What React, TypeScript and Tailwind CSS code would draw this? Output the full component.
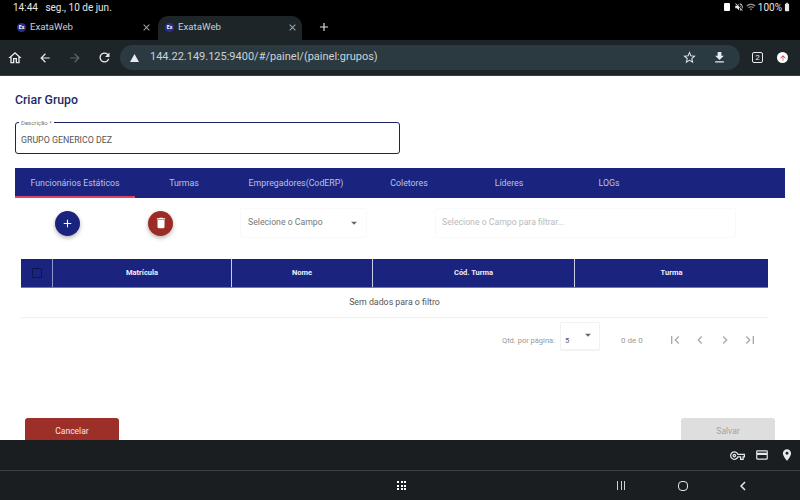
import React from "react";
import {
  MdAdd, MdArrowBack, MdArrowDropDown, MdArrowForward, MdChevronLeft, MdChevronRight, MdClose, MdDelete,
  MdFileDownload, MdFirstPage, MdLastPage, MdLocationOn, MdOutlineCreditCard, MdOutlineHome, MdOutlineVpnKey,
  MdRefresh, MdStarBorder, MdVolumeOff, MdWifi, MdBatteryFull, MdArrowUpward, MdKeyboardArrowLeft,
} from "react-icons/md";

function Favicon() {
  return (
    <span className="w-[9px] h-[9px] rounded-full bg-[#2a2f8f] text-white text-[5px] leading-[9px] text-center font-bold shrink-0">Ex</span>
  );
}

function BrowserTab({ active }: { active?: boolean }) {
  return (
    <div className={active ? "w-[144px] h-[24px] mt-[2px] pb-[2px] rounded-t-[10px] bg-[#1e2528] flex items-center pl-[7px] pr-[4px]" : "w-[155px] h-[24px] mt-[2px] pb-[2px] flex items-center pl-[17px] pr-[3px]"}>
      <Favicon />
      <span className="ml-[4px] text-[9.7px] text-[#c9ced1] flex-1">ExataWeb</span>
      <MdClose className="text-[#a4a9ac] text-[11px]" />
    </div>
  );
}

const tabs = [
  { label: "Funcionários Estáticos", w: "w-[120px]", active: true },
  { label: "Turmas", w: "w-[98px]" },
  { label: "Empregadores(CodERP)", w: "w-[126px]" },
  { label: "Coletores", w: "w-[100px]" },
  { label: "Líderes", w: "w-[100px]" },
  { label: "LOGs", w: "w-[100px]" },
];

export default function App() {
  return (
    <div className="w-[800px] h-[500px] overflow-hidden flex flex-col bg-black font-['Roboto',sans-serif]">
      {/* status bar */}
      <div className="h-[14px] shrink-0 flex items-center justify-between pl-[13px] pr-[8px] text-[10px] text-[#e6e6e6]">
        <span>14:44 <span className="ml-[5px]">seg., 10 de jun.</span></span>
        <span className="flex items-center gap-[2px]">
          <span className="w-[6px] h-[8px] rounded-[1px] bg-white mr-[2px]" />
          <MdVolumeOff className="text-[10px]" />
          <MdWifi className="text-[10px] text-[#999]" />
          <span>100%</span>
          <MdBatteryFull className="text-[10px] -ml-[2px]" />
        </span>
      </div>
      {/* tab strip */}
      <div className="h-[26px] shrink-0 flex text-white">
        <BrowserTab />
        <div className="w-[3px]" />
        <BrowserTab active />
        <MdAdd className="ml-[15px] mt-[6px] text-[14px] text-[#e0e0e0]" />
      </div>
      {/* toolbar */}
      <div className="h-[36px] shrink-0 bg-[#1e2528] border-b border-[#3a3f42] flex items-center text-[#e8eaed]">
        <div className="w-[120px] pl-[7px] flex items-center">
          <MdOutlineHome className="text-[16px]" />
          <MdArrowBack className="text-[14px] ml-[15px]" />
          <MdArrowForward className="text-[14px] ml-[16px] text-[#5f6669]" />
          <MdRefresh className="text-[15px] ml-[15px]" />
        </div>
        <div className="w-[620px] h-[25px] rounded-full bg-[#2a3a40] flex items-center pl-[10px] pr-[13px]">
          <svg width="9" height="8" viewBox="0 0 9 8" className="shrink-0"><path d="M4.5 0L9 8H0z" fill="#e8eaed" /></svg>
          <span className="ml-[11px] text-[11px] text-[#cdd3d5] flex-1">144.22.149.125:9400/#/painel/(painel:grupos)</span>
          <MdStarBorder className="text-[15px] mr-[15px]" />
          <MdFileDownload className="text-[15px]" />
        </div>
        <span className="ml-[12px] w-[11px] h-[11px] rounded-[2px] border border-[#e8eaed] text-[8px] leading-[9px] text-center">2</span>
        <span className="ml-[14px] w-[11px] h-[11px] rounded-full bg-white flex items-center justify-center">
          <MdArrowUpward className="text-[8px] text-[#c0303f]" />
        </span>
      </div>

      {/* page */}
      <div className="h-[364px] shrink-0 overflow-hidden bg-white pl-[15px] pr-[15px] relative">
        <h1 className="mt-[17px] h-[14px] leading-[14px] text-[12.3px] font-medium text-[#1f2a6b]">Criar Grupo</h1>

        <div className="relative mt-[15px] w-[385px] h-[32px] rounded-[3px] border-[1.5px] border-[#1b2260] flex items-center pl-[5px] pt-[6px] text-[8.8px] text-[#555]">
          <span className="absolute -top-[4px] left-[3px] bg-white px-[2px] text-[6px] leading-[7px] text-[#777]">Descrição *</span>
          GRUPO GENERICO DEZ
        </div>

        <div className="mt-[14px] h-[30px] bg-[#1a237e] flex">
          {tabs.map((t) => (
            <div key={t.label} className={`${t.w} h-full pt-[2px] flex items-center justify-center text-[8.8px] text-[#bcc1e2] ${t.active ? "border-y-2 border-t-transparent border-b-[#d9466a]" : ""}`}>
              {t.label}
            </div>
          ))}
        </div>

        {/* actions */}
        <div className="mt-[10px] h-[30px] flex items-center">
          <div className="ml-[40px] w-[25px] h-[25px] rounded-full bg-[#1a237e] shadow-[0_2px_4px_rgba(0,0,0,0.3)] flex items-center justify-center">
            <MdAdd className="text-white text-[13px]" />
          </div>
          <div className="ml-[68px] w-[25px] h-[25px] rounded-full bg-[#9c2b25] shadow-[0_2px_4px_rgba(0,0,0,0.3)] flex items-center justify-center">
            <MdDelete className="text-white text-[14px]" />
          </div>
          <div className="ml-[67px] w-[127px] h-[30px] rounded-[3px] border border-[#f9f9f9] flex items-center justify-between pl-[7px] pr-[5px] text-[8.7px] text-[#777]">
            Selecione o Campo
            <MdArrowDropDown className="text-[14px] text-[#666]" />
          </div>
          <div className="ml-[68px] w-[301px] h-[30px] rounded-[3px] border border-[#f9f9f9] flex items-center pl-[6px] text-[8.7px] text-[#bbbbbb]">
            Selecione o Campo para filtrar...
          </div>
        </div>

        {/* table */}
        <div className="mt-[21px] ml-[6px] w-[747px]">
          <div className="h-[29px] bg-[#1a237e] border-b border-[#6f78b8] grid grid-cols-[32px_179px_141px_202px_193px] text-[7.5px] font-bold text-[#eceefa]">
            <div className="flex items-center justify-center border-r border-[#8d94c8]">
              <span className="w-[10px] h-[10px] rounded-[1px] border border-[#0f1550]" />
            </div>
            <div className="flex items-center justify-center border-r border-[#c9cde6]">Matrícula</div>
            <div className="flex items-center justify-center border-r border-[#c9cde6]">Nome</div>
            <div className="flex items-center justify-center border-r border-[#c9cde6]">Cód. Turma</div>
            <div className="flex items-center justify-center">Turma</div>
          </div>
          <div className="h-[30px] border-b border-[#f1f1f1] flex items-center justify-center text-[8.8px] text-[#555]">
            Sem dados para o filtro
          </div>
          <div className="mt-[4px] h-[28px] flex items-start text-[7.5px] text-[#999]">
            <span className="ml-[481px] mt-[13px]">Qtd. por página:</span>
            <div className="ml-[5px] w-[40px] h-[28px] rounded-[2px] border border-[#f2f2f2] shadow-[0_1px_1px_rgba(0,0,0,0.05)] flex items-start justify-between pl-[4px] pr-[4px] pt-[5px] text-[#555]">
              <span className="mt-[7px]">5</span>
              <MdArrowDropDown className="text-[14px] text-[#666]" />
            </div>
            <span className="ml-[21px] mt-[13px] text-[8px]">0 de 0</span>
            <div className="ml-[24px] mt-[10px] flex items-center gap-[9px] text-[#a9a9a9]">
              <MdFirstPage className="text-[16px]" />
              <MdChevronLeft className="text-[16px]" />
              <MdChevronRight className="text-[16px]" />
              <MdLastPage className="text-[16px]" />
            </div>
          </div>
        </div>

        {/* footer buttons */}
        <div className="mt-[68px] flex justify-between pl-[10px] pr-[10px]">
          <div className="w-[94px] h-[36px] rounded-[3px] bg-[#9c2f28] pt-[7px] text-center text-[8.5px] leading-[13px] text-[#f3e6e4]">Cancelar</div>
          <div className="w-[94px] h-[36px] rounded-[3px] bg-[#dedede] pt-[7px] text-center text-[8.5px] leading-[13px] text-[#a3a3a3]">Salvar</div>
        </div>
      </div>

      {/* tablet bars */}
      <div className="h-[31px] shrink-0 bg-[#1a1e21] border-b border-[#3d4143] flex items-center justify-end pr-[6px] text-[#e6e8e9]">
        <MdOutlineVpnKey className="text-[15px]" />
        <MdOutlineCreditCard className="text-[14px] ml-[10px]" />
        <MdLocationOn className="text-[14px] ml-[11px]" />
      </div>
      <div className="flex-1 bg-[#1a1e21] flex items-center text-[#e6e8e9]">
        <div className="ml-[397px] grid grid-cols-3 gap-[1.5px]">
          {Array.from({ length: 9 }).map((_, i) => (
            <span key={i} className="w-[2px] h-[2px] bg-white" />
          ))}
        </div>
        <div className="ml-[211px] flex gap-[2.5px]">
          <span className="w-[1px] h-[9px] bg-[#cfd1d2]" />
          <span className="w-[1px] h-[9px] bg-[#cfd1d2]" />
          <span className="w-[1px] h-[9px] bg-[#cfd1d2]" />
        </div>
        <span className="ml-[53px] w-[10px] h-[10px] rounded-[4px] border border-[#e6e8e9]" />
        <MdKeyboardArrowLeft className="ml-[46px] text-[18px]" />
      </div>
    </div>
  );
}
